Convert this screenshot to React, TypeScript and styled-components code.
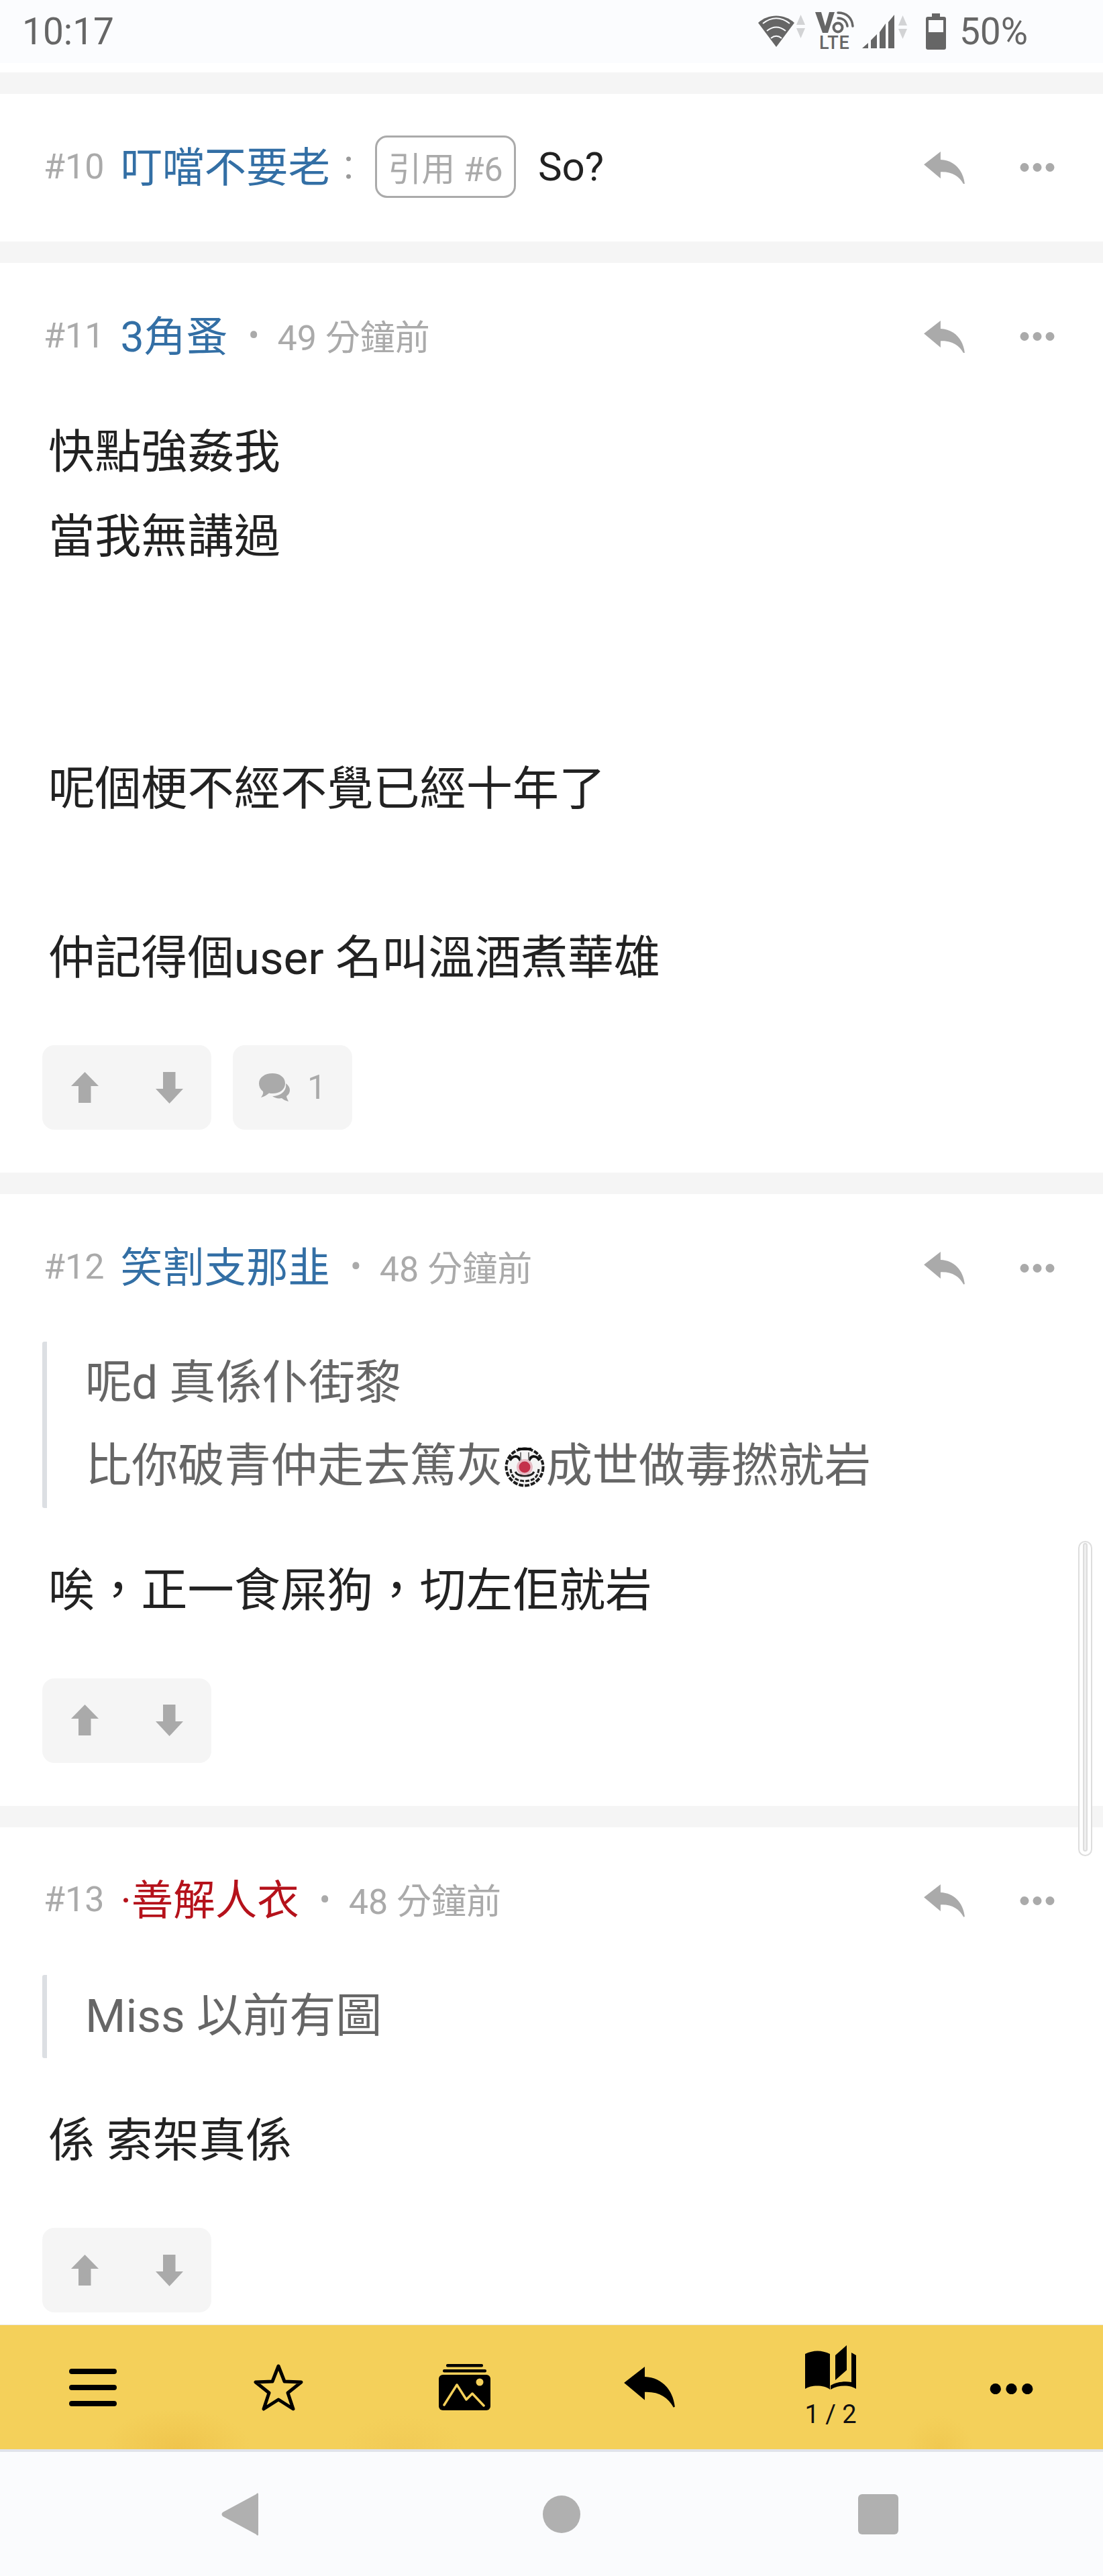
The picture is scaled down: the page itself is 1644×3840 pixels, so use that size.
import styled, { createGlobalStyle } from 'styled-components';

const GlobalStyle = createGlobalStyle`
  html, body {
    margin: 0;
    padding: 0;
    background: #fff;
  }
  body {
    font-family: Roboto, "Noto Sans CJK TC", sans-serif;
  }
`;

function Reply({ size = 61, color = '#aaa' }: { size?: number; color?: string }) {
  return (
    <svg width={size} height={size * 0.8} viewBox="0 0 76 61">
      <path d="M0 24 L31 0 L31 15 C56 16 73 34 76 60 L74 61 C66 46 52 37 31 38 L31 50 Z" fill={color} />
    </svg>
  );
}

function More({ color = '#aaa', size = 52 }: { color?: string; size?: number }) {
  return (
    <svg width={size} height={size / 4} viewBox="0 0 52 13">
      <circle cx="7" cy="6.5" r="6.5" fill={color} />
      <circle cx="26" cy="6.5" r="6.5" fill={color} />
      <circle cx="45" cy="6.5" r="6.5" fill={color} />
    </svg>
  );
}

function ArrowUp() {
  return (
    <svg width="41" height="47" viewBox="0 0 41 47">
      <path d="M20.5 0 L41 21 L29.5 21 L29.5 46 L11 46 L11 21 L0 21 Z" fill="#aaa" />
    </svg>
  );
}

function ArrowDown() {
  return (
    <svg width="41" height="47" viewBox="0 0 41 47">
      <path d="M11 0 L29.5 0 L29.5 25 L41 25 L20.5 47 L0 25 L11 25 Z" fill="#aaa" />
    </svg>
  );
}

function Bubbles() {
  return (
    <svg width="46" height="42" viewBox="0 0 46 42">
      <path
        d="M20 0 C31 0 39 6 39 15 C39 24 31 30 20 30 C18 30 17 30 15 29.5 C11 33 7 35 3 36 C5 33 7 30 6 27 C2 24 0 20 0 15 C0 6 9 0 20 0 Z"
        fill="#aaa"
      />
      <path
        d="M40 15 C44 18 46 21 46 25 C46 29 44 32 41 34 C41 37 43 39 44 42 C40 41 36 39 34 37 C29 38 24 37 20 34 C31 34 42 27 40 15 Z"
        fill="#aaa"
      />
    </svg>
  );
}

function Clown() {
  return (
    <ClownSvg width="60" height="60" viewBox="0 0 60 60">
      <circle cx="30" cy="30" r="27.5" fill="#f4f4f4" stroke="#1c1c1c" strokeWidth="4" strokeDasharray="7 2" />
      <path d="M20 3 L40 3" stroke="#111" strokeWidth="4" />
      <path d="M8 20 C12 13 20 11 24 21 M52 20 C48 13 40 11 36 21" fill="none" stroke="#111" strokeWidth="4" />
      <path d="M24 8 L24 20 M36 8 L36 20" stroke="#777" strokeWidth="2" />
      <path d="M9 33 C11 50 22 50 30 51 C38 50 49 50 51 33" fill="none" stroke="#222" strokeWidth="3" strokeDasharray="6 2" />
      <path d="M16 37 C20 45 40 45 44 37" fill="none" stroke="#222" strokeWidth="3" />
      <circle cx="30" cy="30" r="12" fill="#e6bcc5" />
      <circle cx="30" cy="30" r="8.5" fill="#c4314b" />
    </ClownSvg>
  );
}

function Menu() {
  return (
    <svg width="71" height="56" viewBox="0 0 71 56">
      <rect x="0" y="0" width="71" height="8" rx="4" />
      <rect x="0" y="24" width="71" height="8" rx="4" />
      <rect x="0" y="48" width="71" height="8" rx="4" />
    </svg>
  );
}

function Star() {
  return (
    <svg width="76" height="72" viewBox="0 0 76 72">
      <path
        d="M38 4 L47 27 L72 28 L52 44 L60 68 L38 54 L16 68 L24 44 L4 28 L29 27 Z"
        fill="none"
        stroke="#000"
        strokeWidth="5"
        strokeLinejoin="round"
      />
    </svg>
  );
}

function Gallery() {
  return (
    <svg width="77" height="69" viewBox="0 0 77 69">
      <rect x="11" y="0" width="55" height="4.5" rx="2" />
      <rect x="6" y="8" width="65" height="4.5" rx="2" />
      <rect x="0" y="16" width="77" height="53" rx="6" />
      <circle cx="61" cy="27" r="5.5" fill="#f4d05a" />
      <path d="M8 61 L27 31 L41 53 L50 44 L67 62" fill="none" stroke="#f4d05a" strokeWidth="3.5" strokeLinecap="round" strokeLinejoin="round" />
    </svg>
  );
}

function Book() {
  return (
    <svg width="76" height="67" viewBox="0 0 76 67">
      <path d="M0 13 C12 7 25 7 37 13 L37 66 C28 59 10 59 0 65 Z" />
      <path d="M45 15 L62 0 L62 37 L45 52 Z" />
      <path d="M69 11 L76 15 L76 65 C66 59 50 59 38 66 L38 60 C46 55 58 53 69 55 Z" />
    </svg>
  );
}

const posts = [
  { id: 11, name: '3角蚤', time: '49 分鐘前', lines: ['快點強姦我', '當我無講過', '', '', '呢個梗不經不覺已經十年了', '', '仲記得個user 名叫溫酒煮華雄'], comments: 1 },
  { id: 12, name: '笑割支那韭', time: '48 分鐘前', quote: true, lines: ['唉，正一食屎狗，切左佢就岩'] },
  { id: 13, name: '·善解人衣', red: true, time: '48 分鐘前', quoteText: 'Miss 以前有圖', lines: ['係 索架真係'] },
];

export default function App() {
  return (
    <>
      <GlobalStyle />
      <Screen>
        <StatusBar>
          <Clock>10:17</Clock>
          <StatusIcons>
            <WifiIcon width="70" height="50" viewBox="0 0 70 50">
              <path d="M0 12 C15 -2 39 -2 54 12 L27 48 Z" fill="#666" />
              <path d="M7 13 C20 3 34 3 47 13 M13 24 C22 17 32 17 41 24 M19 35 C24 31 30 31 35 35" fill="none" stroke="#fbfcfe" strokeWidth="2" />
              <path d="M63.5 0 L70 15 L57 15 Z M57 20 L70 20 L63.5 35 Z" fill="#d2d3d5" />
            </WifiIcon>
            <VoLte>
              <svg width="58" height="33" viewBox="0 0 58 33">
                <path d="M0 1 L9 1 L15 22 L21 1 L29 1 L19 32 L11 32 Z" fill="#666" />
                <circle cx="34" cy="24" r="6.5" fill="none" stroke="#666" strokeWidth="4" />
                <path d="M34 10 C42 10 47 15 48 22 M34 2 C47 2 55 10 56 22" fill="none" stroke="#666" strokeWidth="3.5" strokeLinecap="round" />
              </svg>
              <LteLabel>LTE</LteLabel>
            </VoLte>
            <SignalIcon width="68" height="52" viewBox="0 0 68 52">
              <path d="M0 51 L9 43 L9 51 Z M13 39 L22 30 L22 51 L13 51 Z M26 27 L35 14 L35 51 L26 51 Z M39 12 L48 1 L48 51 L39 51 Z" fill="#666" />
              <path d="M60.5 2 L67 17 L54 17 Z M54 22 L67 22 L60.5 37 Z" fill="#d2d3d5" />
            </SignalIcon>
            <svg width="30" height="54" viewBox="0 0 30 54">
              <path d="M9 0 L21 0 L21 5 L27 5 C29 5 30 6 30 8 L30 51 C30 53 29 54 27 54 L3 54 C1 54 0 53 0 51 L0 8 C0 6 1 5 3 5 L9 5 Z" fill="#666" />
              <rect x="4" y="10" width="22" height="18" fill="#fbfcfe" />
            </svg>
            <Battery>50%</Battery>
          </StatusIcons>
        </StatusBar>

        <Feed>
          <PrevTail />
          <Gap />
          <div>
            <Header>
              <HeaderText>
                <Num>#10</Num>
                <Name>叮噹不要老</Name>
                <Colon>:</Colon>
                <QuoteTag>引用 #6</QuoteTag>
                <InlineBody>So?</InlineBody>
              </HeaderText>
              <Actions>
                <Reply />
                <More />
              </Actions>
            </Header>
          </div>
          {posts.map(p => (
            <div key={p.id}>
              <Gap />
              <Post>
                <Header>
                  <HeaderText>
                    <Num>#{p.id}</Num>
                    <Name $red={p.red}>{p.name}</Name>
                    <Dot>•</Dot>
                    <Time>{p.time}</Time>
                  </HeaderText>
                  <Actions>
                    <Reply />
                    <More />
                  </Actions>
                </Header>
                {p.quote && (
                  <Quote>
                    <div>呢d 真係仆街黎</div>
                    <div>比你破青仲走去篤灰<Clown />成世做毒撚就岩</div>
                  </Quote>
                )}
                {p.quoteText && <Quote><div>{p.quoteText}</div></Quote>}
                <Body>
                  {p.lines.map((l, i) => <BodyLine key={i}>{l}</BodyLine>)}
                </Body>
                <Buttons>
                  <VoteBox>
                    <ArrowUp />
                    <ArrowDown />
                  </VoteBox>
                  {p.comments && (
                    <CommentBox>
                      <Bubbles />
                      <span>{p.comments}</span>
                    </CommentBox>
                  )}
                </Buttons>
              </Post>
            </div>
          ))}
          <ScrollThumb />
        </Feed>

        <Toolbar>
          <ToolItem><Menu /></ToolItem>
          <ToolItem><Star /></ToolItem>
          <ToolItem><Gallery /></ToolItem>
          <ToolItem><Reply size={76} color="#000" /></ToolItem>
          <ToolItem>
            <Book />
            <PageLabel>1 / 2</PageLabel>
          </ToolItem>
          <ToolItem $low><More color="#000" size={65} /></ToolItem>
        </Toolbar>

        <NavBar>
          <svg width="56" height="64" viewBox="0 0 56 64">
            <path d="M55 2 L55 62 C55 64 53 64 52 62 L2 35 C0 33 0 31 2 29 L52 2 C53 0 55 0 55 2 Z" fill="#b0b0b0" />
          </svg>
          <HomeIcon width="56" height="56" viewBox="0 0 56 56">
            <circle cx="28" cy="28" r="28" fill="#b0b0b0" />
          </HomeIcon>
          <svg width="60" height="60" viewBox="0 0 60 60">
            <rect width="60" height="60" rx="6" fill="#b0b0b0" />
          </svg>
        </NavBar>
      </Screen>
    </>
  );
}

const Screen = styled.div`
  width: 1644px;
  height: 3840px;
  display: flex;
  flex-direction: column;
  overflow: hidden;
  background: #fff;
`;

const StatusBar = styled.div`
  height: 94px;
  flex: none;
  background: #fbfcfe;
  display: flex;
  align-items: center;
  justify-content: space-between;
  padding: 0 112px 0 33px;
  color: #666;
  font-size: 55px;
`;

const Clock = styled.div`
  line-height: 94px;
`;

const StatusIcons = styled.div`
  display: flex;
  align-items: center;
  gap: 12px;
`;

const WifiIcon = styled.svg`
  margin-right: 3px;
`;

const SignalIcon = styled.svg`
  margin-right: 15px;
`;

const VoLte = styled.div`
  display: flex;
  flex-direction: column;
  align-items: center;
  width: 58px;
`;

const LteLabel = styled.div`
  font-size: 27px;
  line-height: 28px;
  font-weight: 500;
  letter-spacing: 1px;
`;

const Battery = styled.div`
  margin-left: 8px;
`;

const Feed = styled.div`
  flex: 1;
  min-height: 0;
  position: relative;
  overflow: hidden;
`;

const PrevTail = styled.div`
  height: 14px;
`;

const Gap = styled.div`
  height: 32px;
  background: #f5f5f5;
`;

const Post = styled.div`
  padding-bottom: 64px;
`;

const Header = styled.div`
  height: 220px;
  display: flex;
  align-items: center;
  justify-content: space-between;
  padding: 0 72px 0 65px;
`;

const HeaderText = styled.div`
  display: flex;
  align-items: center;
  padding-bottom: 4px;
`;

const Num = styled.span`
  font-size: 52px;
  color: #aaa;
  margin-right: 24px;
`;

const Name = styled.span<{ $red?: boolean }>`
  font-size: 62.5px;
  padding-bottom: 8px;
  color: ${p => (p.$red ? '#b5121b' : '#336fa5')};
`;

const Colon = styled.span`
  font-size: 62px;
  color: #999;
  margin: 0 32px 8px 20px;
`;

const QuoteTag = styled.span`
  width: 210px;
  height: 93px;
  box-sizing: border-box;
  display: flex;
  align-items: center;
  justify-content: center;
  border: 3px solid #aaa;
  border-radius: 18px;
  font-size: 50px;
  color: #aaa;
  white-space: nowrap;
`;

const InlineBody = styled.span`
  font-size: 60px;
  color: #222;
  margin-left: 33px;
`;

const Dot = styled.span`
  font-size: 50px;
  color: #aaa;
  margin: 0 27px 0 30px;
`;

const Time = styled.span`
  font-size: 52px;
  color: #aaa;
  padding-bottom: 2px;
`;

const Actions = styled.div`
  display: flex;
  align-items: center;
  gap: 82px;
`;

const Quote = styled.blockquote`
  margin: 0 0 61px 63px;
  padding-left: 57px;
  border-left: 7px solid #dcdfe3;
  border-radius: 3px;
  font-size: 69.2px;
  line-height: 124px;
  color: #666;
`;

const ClownSvg = styled.svg`
  vertical-align: -8px;
  margin: 0 2px;
`;

const Body = styled.div`
  padding-left: 72px;
  font-size: 69.2px;
  line-height: 125.6px;
  color: #222;
`;

const BodyLine = styled.div`
  min-height: 125.6px;
`;

const Buttons = styled.div`
  display: flex;
  gap: 32px;
  margin: 67px 0 0 63px;
`;

const VoteBox = styled.div`
  width: 252px;
  height: 126px;
  border-radius: 18px;
  background: #f5f5f5;
  display: flex;
  align-items: center;
  justify-content: center;
  gap: 85px;
`;

const CommentBox = styled.div`
  width: 178px;
  height: 126px;
  border-radius: 18px;
  background: #f5f5f5;
  display: flex;
  align-items: center;
  justify-content: center;
  gap: 26px;
  font-size: 50px;
  color: #aaa;
`;

const ScrollThumb = styled.div`
  position: absolute;
  top: 2203px;
  left: 1607px;
  width: 21px;
  height: 470px;
  box-sizing: border-box;
  border: 2px solid #ddd;
  border-radius: 11px;
  background: #fff;
  &::after {
    content: '';
    display: block;
    width: 7px;
    height: calc(100% - 6px);
    margin: 1px auto;
    border: 2px solid #ddd;
    border-radius: 5px;
    box-sizing: border-box;
    background: #efefef;
  }
`;

const Toolbar = styled.div`
  height: 186px;
  flex: none;
  box-sizing: border-box;
  border-top: 1px solid #ececec;
  display: grid;
  grid-template-columns: 276px 278px 276px 276px 264px 274px;
  background:
    radial-gradient(ellipse 110px 60px at 265px 100%, #efc44c 0%, rgba(239, 196, 76, 0) 100%),
    radial-gradient(ellipse 90px 50px at 600px 100%, #f1ca55 0%, rgba(241, 202, 85, 0) 100%),
    radial-gradient(ellipse 50px 50px at 1400px 100%, #f0c850 0%, rgba(240, 200, 80, 0) 100%),
    #f4d05a;
`;

const ToolItem = styled.div<{ $low?: boolean }>`
  display: flex;
  flex-direction: column;
  align-items: center;
  justify-content: center;
  padding-top: ${p => (p.$low ? '5px' : '0')};
  svg {
    fill: #000;
  }
`;

const PageLabel = styled.div`
  font-size: 38px;
  line-height: 44px;
  color: #111;
  margin-top: 14px;
`;

const NavBar = styled.div`
  height: 189px;
  flex: none;
  box-sizing: border-box;
  border-top: 4px solid #e0e3ea;
  background: #fafbfd;
  display: flex;
  align-items: center;
  justify-content: space-between;
  padding: 0 305px 0 330px;
`;

const HomeIcon = styled.svg`
  margin-left: 8px;
`;
